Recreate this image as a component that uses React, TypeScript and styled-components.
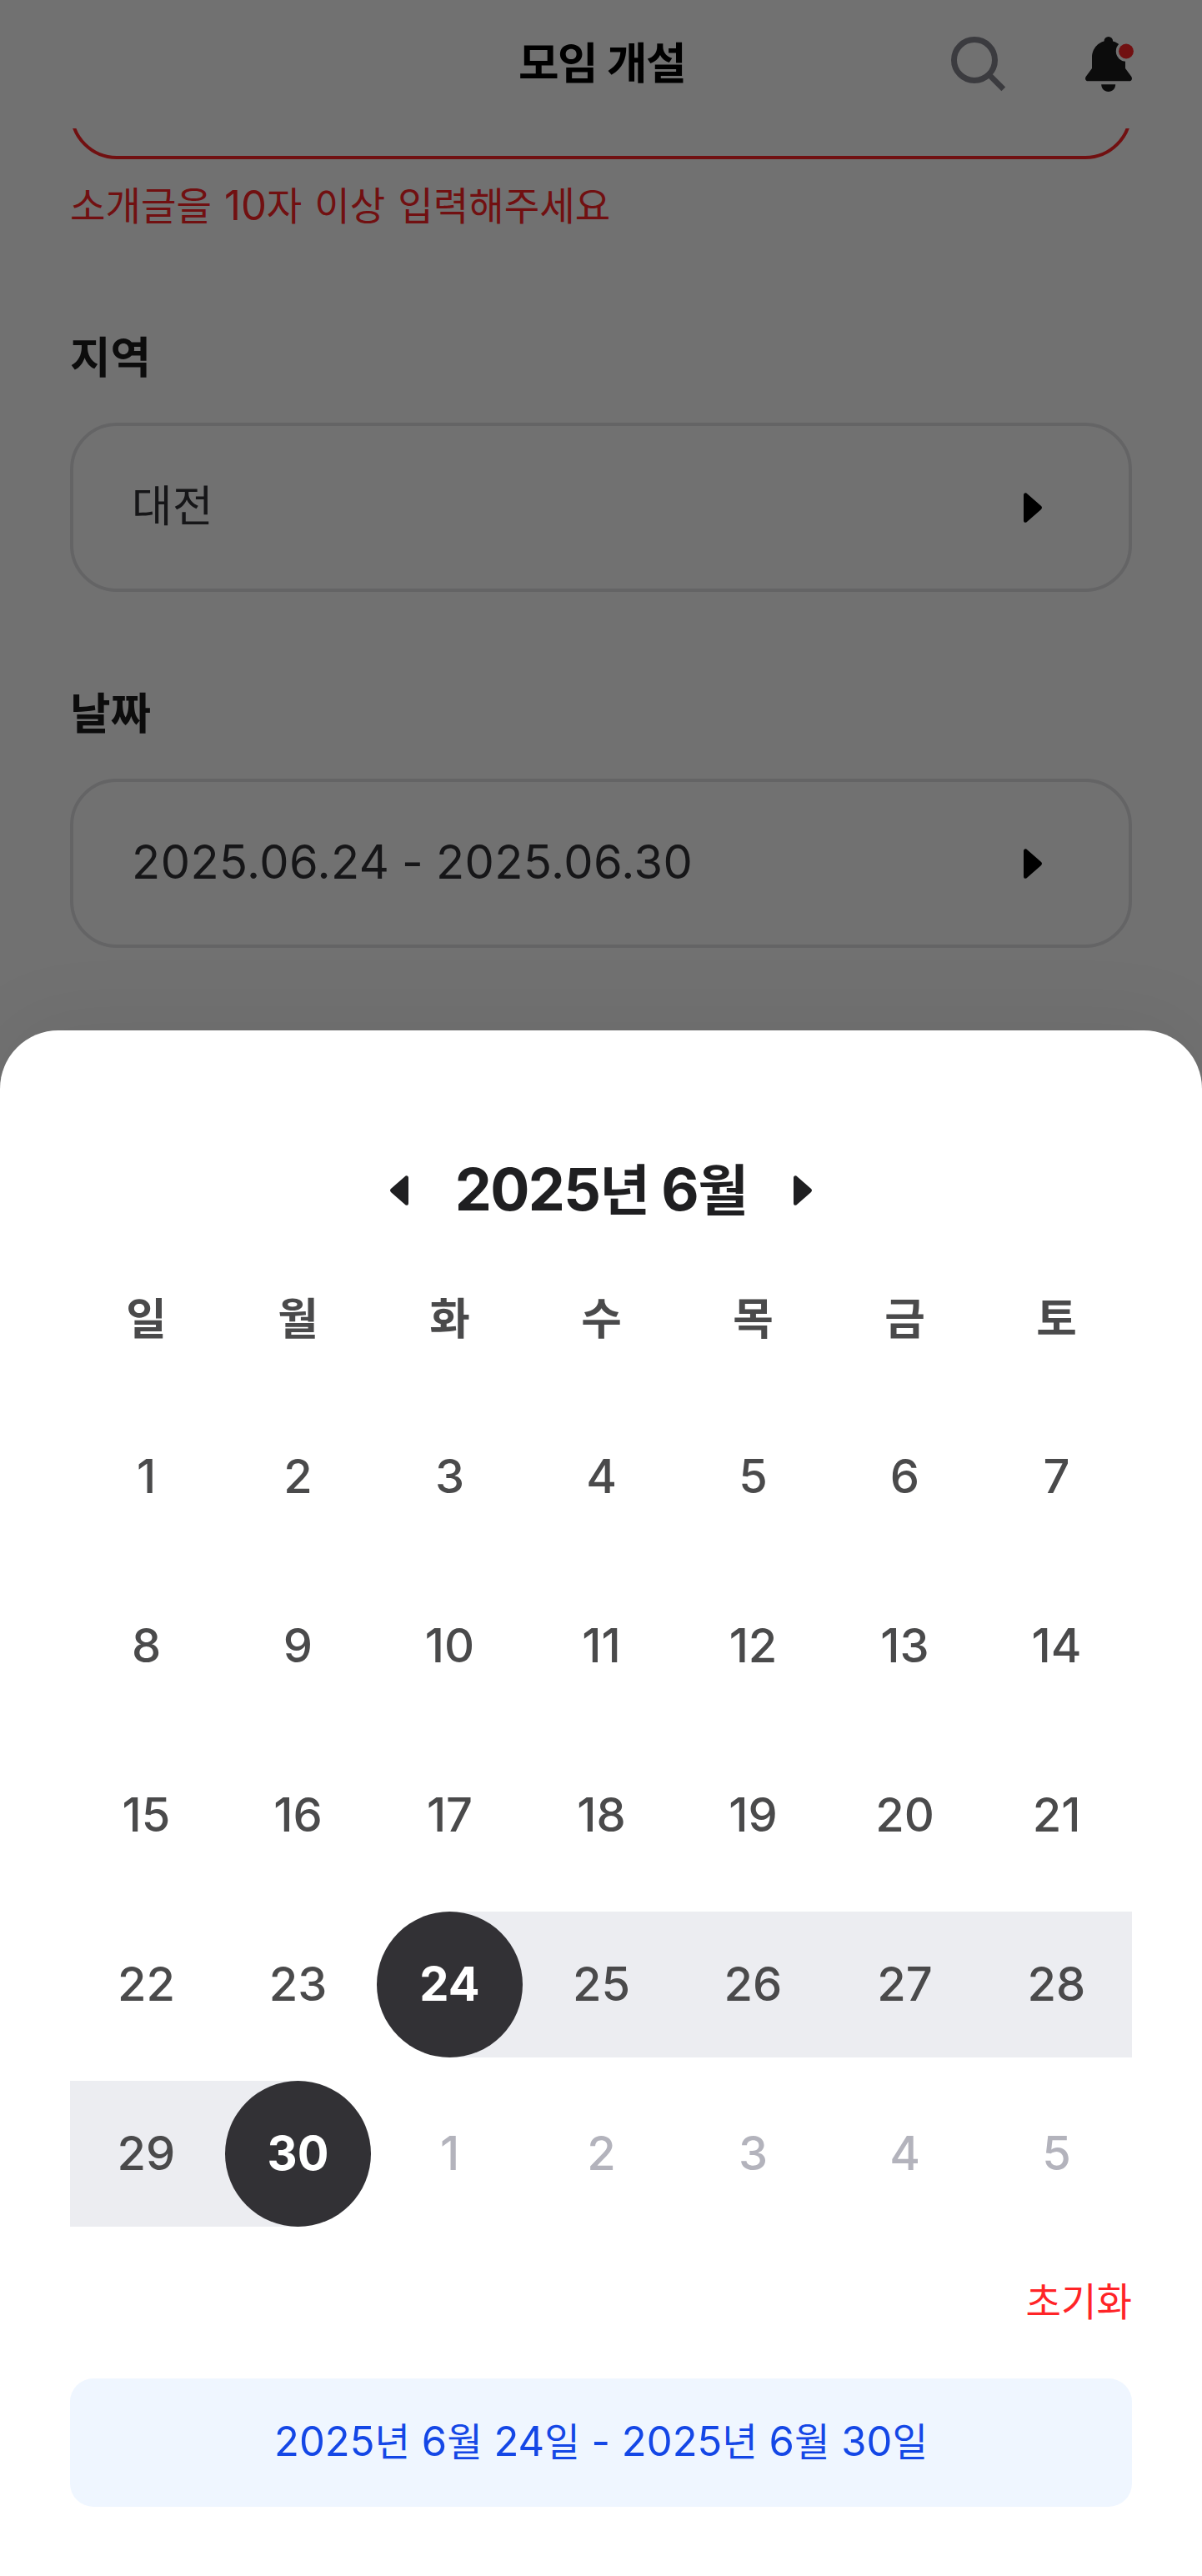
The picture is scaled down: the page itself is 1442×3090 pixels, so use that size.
import React, { Fragment } from "react";
import styled, { createGlobalStyle, css } from "styled-components";

const Global = createGlobalStyle`
  * { box-sizing: border-box; }
  body {
    margin: 0;
    background: #fff;
    font-family: Inter, "Noto Sans CJK KR", sans-serif;
    -webkit-font-smoothing: antialiased;
  }
  button {
    border: 0;
    padding: 0;
    background: none;
    font: inherit;
    color: inherit;
    cursor: pointer;
  }
`;

const Screen = styled.div`
  position: relative;
  width: 1442px;
  height: 3090px;
  overflow: hidden;
  background: #fff;
`;

const Header = styled.header`
  display: grid;
  grid-template-columns: 1fr auto 1fr;
  align-items: center;
  height: 154px;
  padding: 0 82px 0 84px;
`;

const PageTitle = styled.h1`
  grid-column: 2;
  margin: 0;
  padding-bottom: 3px;
  font-size: 56px;
  line-height: 84px;
  font-weight: 700;
  letter-spacing: -1.5px;
  color: #000;
`;

const HeaderActions = styled.div`
  display: flex;
  justify-content: flex-end;
  align-items: center;
  gap: 95px;

  button { display: flex; }
`;

const Form = styled.main`
  display: flex;
  flex-direction: column;
  overflow: hidden;
  height: 1082px;
  padding: 0 84px;
`;

const IntroInput = styled.div`
  flex: none;
  height: 237px;
  margin-top: -200px;
  border: 4px solid #ff2427;
  border-radius: 56px;
`;

const ErrorText = styled.p`
  margin: 21px 0 0;
  font-size: 49px;
  line-height: 70px;
  word-spacing: 1.2px;
  color: #ff2427;
`;

const Field = styled.section<{ $gap: number }>`
  margin-top: ${(p) => p.$gap}px;
`;

const Label = styled.h2`
  margin: 0 0 36px;
  font-size: 56px;
  line-height: 84px;
  font-weight: 700;
  color: #1c1b1d;
`;

const SelectBox = styled.button`
  display: flex;
  align-items: center;
  justify-content: space-between;
  width: 100%;
  height: 203px;
  padding: 0 104px 0 70px;
  border: 4px solid #e1e1e5;
  border-radius: 56px;
  font-size: 56px;
  line-height: 84px;
  letter-spacing: 0.48px;
  word-spacing: -1.6px;
  color: #323236;
`;

const SelectValue = styled.span`
  padding-bottom: 4px;
`;

const Backdrop = styled.div`
  position: absolute;
  inset: 0;
  background: rgba(0, 0, 0, 0.557);
`;

const Sheet = styled.section`
  position: absolute;
  inset: auto 0 0;
  display: flex;
  flex-direction: column;
  height: 1854px;
  padding: 139px 84px 83px;
  border-radius: 70px 70px 0 0;
  background: #fff;
  box-shadow: 0 -14px 100px rgba(0, 0, 0, 0.05);
`;

const MonthNav = styled.div`
  display: flex;
  align-items: center;
  justify-content: center;
  gap: 56px;
  height: 105px;

  button { display: flex; }
`;

const MonthTitle = styled.h3`
  margin: 0;
  font-size: 70px;
  line-height: 105px;
  font-weight: 700;
  letter-spacing: -1.65px;
  color: #1f1f21;
`;

const WeekRow = styled.div`
  display: grid;
  grid-template-columns: repeat(7, 1fr);
  margin-top: 59px;
`;

const Weekday = styled.span`
  padding-left: 1px;
  font-size: 56px;
  line-height: 84px;
  font-weight: 600;
  text-align: center;
  color: #4a4a4b;
`;

const Days = styled.div`
  display: grid;
  grid-template-columns: repeat(7, 1fr);
  grid-auto-rows: 175px;
  row-gap: 28px;
  margin-top: 60px;
`;

type Range = "none" | "start" | "mid" | "end";

const rangeFill: Record<Range, string> = {
  none: "none",
  start: "linear-gradient(90deg, transparent 50%, #ecedf1 50%)",
  mid: "linear-gradient(#ecedf1, #ecedf1)",
  end: "linear-gradient(90deg, #ecedf1 50%, transparent 50%)",
};

const DayCell = styled.div<{ $range: Range }>`
  display: flex;
  justify-content: center;
  background: ${(p) => rangeFill[p.$range]};
`;

const Day = styled.button<{ $picked: boolean; $muted: boolean }>`
  width: 175px;
  height: 175px;
  padding: 0 0 1px 1px;
  border-radius: 50%;
  font-size: 56px;
  line-height: 84px;
  font-weight: 500;
  color: ${(p) => (p.$muted ? "#b3b3bc" : "#4a4a4b")};
  ${(p) =>
    p.$picked &&
    css`
      background: #323135;
      color: #fff;
      font-weight: 700;
    `}
`;

const ResetButton = styled.button`
  align-self: flex-end;
  margin-top: 55px;
  font-size: 49px;
  line-height: 70px;
  color: #ff2427;
`;

const Summary = styled.button`
  height: 154px;
  margin-top: auto;
  padding-bottom: 2px;
  border-radius: 28px;
  background: #eff6ff;
  font-size: 49px;
  line-height: 70px;
  color: #1447e6;
`;

const Hangul = styled.span`
  font-size: 0.943em;
`;

/* Hangul runs are set slightly smaller than the Latin digits beside them. */
function Text({ children }: { children: string }) {
  return (
    <>
      {children.split(/([가-힣]+)/).map((part, i) =>
        i % 2 ? <Hangul key={i}>{part}</Hangul> : <Fragment key={i}>{part}</Fragment>
      )}
    </>
  );
}

const SearchIcon = () => (
  <svg width="66" height="66" viewBox="0 0 66 66" fill="none" stroke="#85858e">
    <circle cx="28" cy="28" r="24.5" strokeWidth="7" />
    <path d="M45.8 45.8 62.8 62.8" strokeWidth="6.8" />
  </svg>
);

const BellIcon = () => (
  <svg width="58" height="66" viewBox="0 0 58 66">
    <mask id="badge-gap">
      <rect width="58" height="66" fill="#fff" />
      <circle cx="49" cy="17.5" r="12.2" fill="#000" />
    </mask>
    <g fill="#1c1b1d" mask="url(#badge-gap)">
      <circle cx="27.8" cy="5.3" r="5.3" />
      <path d="M27.8 4.8C16.600 4.800 8 13.800 8 25V38L.8 47.800C-1 50.500 .5 53.300 3.500 53.300H52.500C55.500 53.300 57 50.500 55.200 47.800L48 38V25C48 13.800 39 4.800 27.800 4.800Z" />
      <path d="M19.200 57.300H36.200C36.200 62.500 32.500 66 27.700 66S19.200 62.500 19.200 57.300Z" />
    </g>
    <circle cx="49" cy="17.5" r="8.900" fill="#ff2427" />
  </svg>
);

const Arrow = ({ left, color = "#000" }: { left?: boolean; color?: string }) => (
  <svg width="22" height="36" viewBox="0 0 22 36">
    <path
      fill={color}
      transform={left ? "matrix(-1 0 0 1 22 0)" : undefined}
      d="M0 2.800V33.200C0 36 2.700 36.800 4.500 34.600L20.800 20.200C22.400 18.700 22.400 17.300 20.800 15.800L4.500 1.400C2.700-.8 0 0 0 2.800Z"
    />
  </svg>
);

const weekdays = ["일", "월", "화", "수", "목", "금", "토"];
const days = Array.from({ length: 35 }, (_, i) => i + 1);

const rangeOf = (d: number): Range =>
  d === 24 ? "start" : d === 30 ? "end" : d > 24 && d < 30 ? "mid" : "none";

export default function App() {
  return (
    <Screen>
      <Global />
      <Header>
        <PageTitle>
          <Text>모임 개설</Text>
        </PageTitle>
        <HeaderActions>
          <button aria-label="검색"><SearchIcon /></button>
          <button aria-label="알림"><BellIcon /></button>
        </HeaderActions>
      </Header>
      <Form>
        <IntroInput />
        <ErrorText>
          <Text>소개글을 10자 이상 입력해주세요</Text>
        </ErrorText>
        <Field $gap={104}>
          <Label><Text>지역</Text></Label>
          <SelectBox>
            <SelectValue><Text>대전</Text></SelectValue>
            <Arrow />
          </SelectBox>
        </Field>
        <Field $gap={103}>
          <Label><Text>날짜</Text></Label>
          <SelectBox>
            <SelectValue>2025.06.24 - 2025.06.30</SelectValue>
            <Arrow />
          </SelectBox>
        </Field>
      </Form>
      <Backdrop />
      <Sheet>
        <MonthNav>
          <button aria-label="이전 달"><Arrow left color="#1f1f21" /></button>
          <MonthTitle><Text>2025년 6월</Text></MonthTitle>
          <button aria-label="다음 달"><Arrow color="#1f1f21" /></button>
        </MonthNav>
        <WeekRow>
          {weekdays.map((w) => (
            <Weekday key={w}><Text>{w}</Text></Weekday>
          ))}
        </WeekRow>
        <Days>
          {days.map((d) => (
            <DayCell key={d} $range={rangeOf(d)}>
              <Day $picked={d === 24 || d === 30} $muted={d > 30}>
                {d > 30 ? d - 30 : d}
              </Day>
            </DayCell>
          ))}
        </Days>
        <ResetButton><Text>초기화</Text></ResetButton>
        <Summary>
          <Text>2025년 6월 24일 - 2025년 6월 30일</Text>
        </Summary>
      </Sheet>
    </Screen>
  );
}
